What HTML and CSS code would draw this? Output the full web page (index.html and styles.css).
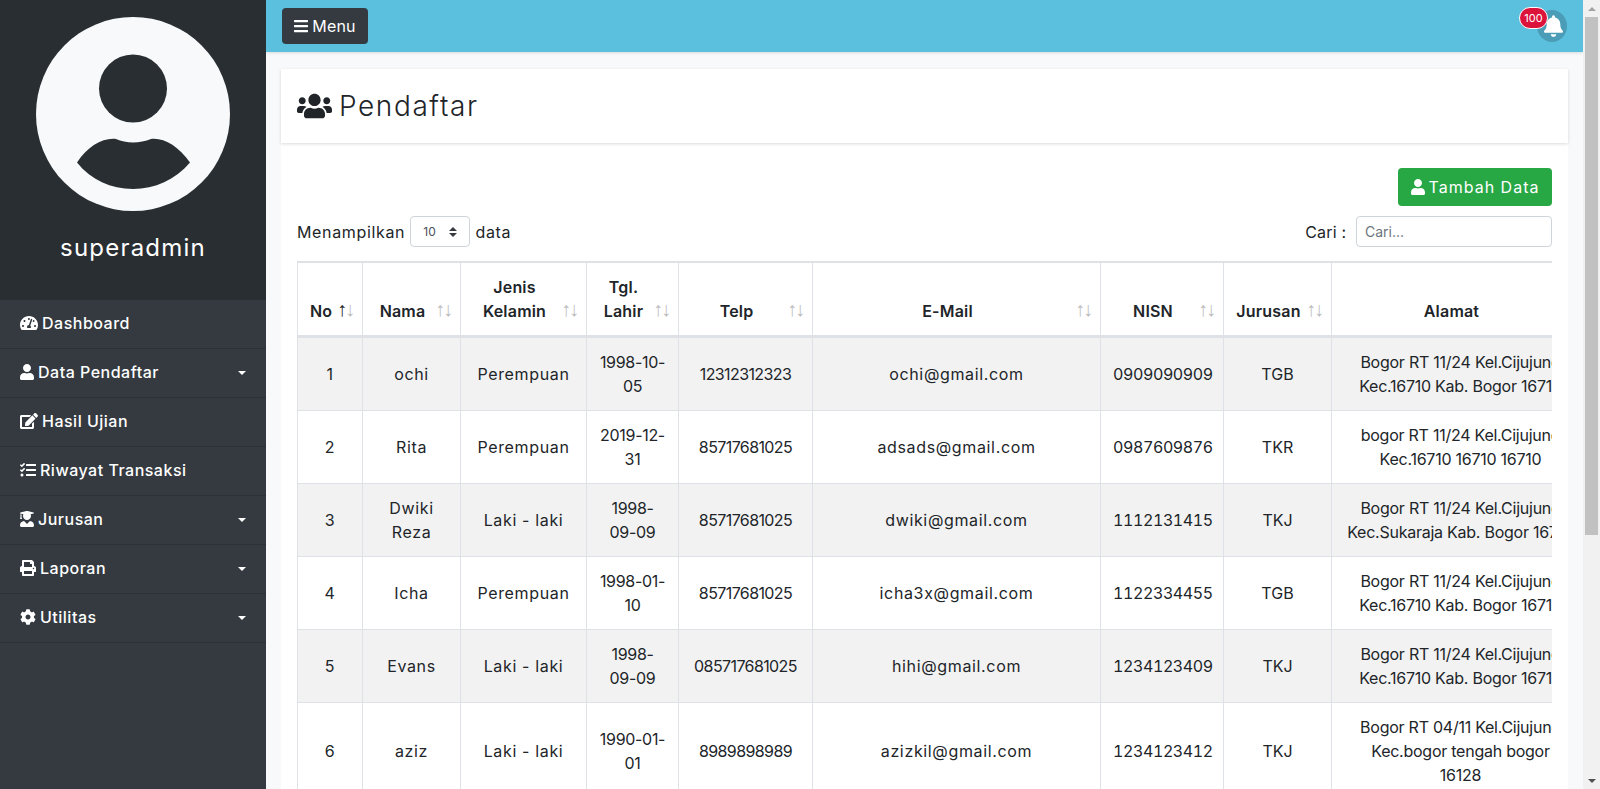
FILE: index.html
```html
<!DOCTYPE html>
<html lang="id">
<head>
<meta charset="utf-8">
<title>Pendaftar</title>
<link rel="stylesheet" href="styles.css">
</head>
<body>
<div class="app">
  <aside class="sidebar">
    <div class="side-head">
      <svg class="avatar" viewBox="36 17 194 194"><circle cx="133" cy="114" r="97" fill="#f8f9fa"/><circle cx="133" cy="88.5" r="34" fill="#292e33"/><path fill="#292e33" d="M77 162.5C88 146 103 137.500 116 139C126 143.500 140 143.500 151 139C164 137.500 178 146 190 162.500C175 180 155 189 133 189C111 189 91 180 77 162.500Z"/></svg>
      <div class="username">superadmin</div>
    </div>
    <nav class="menu">
      <a class="item"><svg class="ic w18" viewBox="0 0 576 512"><path d="M288 32C128.940 32 0 160.940 0 320c0 52.800 14.250 102.260 39.060 144.800 5.610 9.620 16.300 15.200 27.440 15.200h443c11.140 0 21.830-5.580 27.440-15.200C561.750 422.260 576 372.800 576 320c0-159.060-128.940-288-288-288zm0 64c14.710 0 26.580 10.130 30.320 23.650-1.110 2.260-2.640 4.230-3.450 6.670l-9.220 27.670c-5.130 3.490-10.970 6.010-17.640 6.010-17.670 0-32-14.330-32-32S270.330 96 288 96zM96 384c-17.670 0-32-14.330-32-32s14.330-32 32-32 32 14.330 32 32-14.330 32-32 32zm48-160c-17.670 0-32-14.330-32-32s14.330-32 32-32 32 14.330 32 32-14.330 32-32 32zm246.770-72.410l-61.330 184C343.130 347.330 352 364.540 352 384c0 11.720-3.380 22.550-8.880 32H232.880c-5.500-9.450-8.880-20.280-8.880-32 0-33.940 26.500-61.430 59.900-63.590l61.340-184.010c4.170-12.560 17.730-19.450 30.360-15.170 12.570 4.190 19.350 17.790 15.170 30.360zm14.660 57.200l15.520-46.550c3.470-1.290 7.130-2.230 11.050-2.230 17.670 0 32 14.330 32 32s-14.330 32-32 32c-11.380-.01-20.890-6.280-26.570-15.220zM480 384c-17.670 0-32-14.330-32-32s14.330-32 32-32 32 14.330 32 32-14.330 32-32 32z"/></svg><span>Dashboard</span></a>
      <a class="item caret"><svg class="ic w14" viewBox="0 0 448 512"><path d="M224 256c70.700 0 128-57.300 128-128S294.700 0 224 0 96 57.300 96 128s57.300 128 128 128zm89.600 32h-16.700c-22.200 10.200-46.900 16-72.900 16s-50.600-5.800-72.900-16h-16.700C60.200 288 0 348.200 0 422.400V464c0 26.500 21.500 48 48 48h352c26.500 0 48-21.500 48-48v-41.600c0-74.200-60.200-134.400-134.400-134.400z"/></svg><span>Data Pendaftar</span></a>
      <a class="item"><svg class="ic w18" viewBox="0 0 576 512"><path d="M402.600 83.200l90.200 90.200c3.800 3.800 3.800 10 0 13.800L274.400 405.600l-92.800 10.300c-12.400 1.400-22.900-9.100-21.500-21.500l10.300-92.800L388.800 83.200c3.800-3.800 10-3.800 13.800 0zm162-22.900l-48.800-48.800c-15.200-15.200-39.900-15.200-55.200 0l-35.400 35.400c-3.800 3.800-3.800 10 0 13.800l90.200 90.200c3.800 3.800 10 3.800 13.800 0l35.400-35.400c15.200-15.300 15.200-40 0-55.200zM384 346.200V448H64V128h229.800c3.200 0 6.200-1.300 8.500-3.500l40-40c7.600-7.600 2.200-20.500-8.500-20.500H48C21.500 64 0 85.500 0 112v352c0 26.500 21.500 48 48 48h352c26.500 0 48-21.500 48-48V306.200c0-10.700-12.900-16-20.500-8.500l-40 40c-2.200 2.300-3.500 5.300-3.500 8.500z"/></svg><span>Hasil Ujian</span></a>
      <a class="item"><svg class="ic w16" viewBox="0 0 512 512"><path d="M139.610 35.500a12 12 0 0 0-17 0L58.930 98.810l-22.700-22.120a12 12 0 0 0-17 0L3.530 92.410a12 12 0 0 0 0 17l47.590 47.400a12.780 12.780 0 0 0 17.610 0l15.590-15.620L156.520 69a12.090 12.090 0 0 0 .09-17zm0 159.190a12 12 0 0 0-17 0l-63.680 63.720-22.700-22.100a12 12 0 0 0-17 0L3.530 252a12 12 0 0 0 0 17L51 316.500a12.770 12.770 0 0 0 17.600 0l15.700-15.690 72.200-72.220a12 12 0 0 0 .09-16.900zM64 368c-26.490 0-48.590 21.500-48.590 48S37.530 464 64 464a48 48 0 0 0 0-96zm432 16H208a16 16 0 0 0-16 16v32a16 16 0 0 0 16 16h288a16 16 0 0 0 16-16v-32a16 16 0 0 0-16-16zm0-320H208a16 16 0 0 0-16 16v32a16 16 0 0 0 16 16h288a16 16 0 0 0 16-16V80a16 16 0 0 0-16-16zm0 160H208a16 16 0 0 0-16 16v32a16 16 0 0 0 16 16h288a16 16 0 0 0 16-16v-32a16 16 0 0 0-16-16z"/></svg><span>Riwayat Transaksi</span></a>
      <a class="item caret"><svg class="ic w14" viewBox="0 0 448 512"><path d="M319.400 320.600L224 416l-95.400-95.400C57.100 323.700 0 382.200 0 454.400v9.600c0 26.500 21.500 48 48 48h352c26.500 0 48-21.500 48-48v-9.600c0-72.200-57.100-130.700-128.600-133.800zM13.600 79.800l6.400 1.500v58.400c-7 4.200-12 11.500-12 20.300 0 8.400 4.600 15.400 11.100 19.700L3.500 242c-1.700 6.900 2.100 14 7.600 14h41.800c5.500 0 9.300-7.100 7.600-14l-15.600-62.300C51.400 175.400 56 168.400 56 160c0-8.800-5-16.100-12-20.300V87.100l66 15.900c-8.600 17.200-14 36.400-14 57 0 70.700 57.300 128 128 128s128-57.300 128-128c0-20.600-5.300-39.800-14-57l96.300-23.200c18.200-4.400 18.200-27.100 0-31.500l-190.400-46c-13-3.100-26.700-3.100-39.700 0L13.600 48.200c-18.100 4.400-18.100 27.200 0 31.600z"/></svg><span>Jurusan</span></a>
      <a class="item caret"><svg class="ic w16" viewBox="0 0 512 512"><path d="M448 192V77.250c0-8.490-3.370-16.620-9.370-22.630L393.370 9.370c-6-6-14.140-9.370-22.630-9.370H96C78.330 0 64 14.330 64 32v160c-35.350 0-64 28.650-64 64v112c0 8.840 7.160 16 16 16h48v96c0 17.670 14.330 32 32 32h320c17.670 0 32-14.330 32-32v-96h48c8.840 0 16-7.160 16-16V256c0-35.350-28.650-64-64-64zm-64 256H128v-96h256v96zm0-224H128V64h192v48c0 8.840 7.160 16 16 16h48v96zm48 72c-13.250 0-24-10.750-24-24 0-13.260 10.750-24 24-24s24 10.740 24 24c0 13.250-10.750 24-24 24z"/></svg><span>Laporan</span></a>
      <a class="item caret"><svg class="ic w16" viewBox="0 0 512 512"><path d="M487.400 315.700l-42.600-24.600c4.300-23.200 4.300-47 0-70.200l42.600-24.600c4.900-2.800 7.100-8.600 5.500-14-11.100-35.600-30-67.800-54.700-94.600-3.800-4.100-10-5.100-14.800-2.300L380.800 110c-17.900-15.400-38.500-27.300-60.800-35.100V25.800c0-5.600-3.900-10.500-9.400-11.700-36.700-8.200-74.300-7.800-109.200 0-5.500 1.200-9.400 6.100-9.400 11.700V75c-22.200 7.900-42.800 19.800-60.800 35.100L88.700 85.500c-4.900-2.800-11-1.900-14.800 2.300-24.700 26.700-43.600 58.900-54.700 94.600-1.700 5.400.6 11.200 5.500 14L67.300 221c-4.300 23.200-4.300 47 0 70.200l-42.600 24.600c-4.900 2.800-7.100 8.600-5.500 14 11.100 35.600 30 67.800 54.700 94.600 3.800 4.100 10 5.100 14.800 2.300l42.600-24.600c17.900 15.400 38.500 27.300 60.800 35.100v49.200c0 5.600 3.900 10.500 9.400 11.700 36.700 8.200 74.300 7.800 109.200 0 5.500-1.200 9.400-6.100 9.400-11.700v-49.200c22.200-7.900 42.800-19.800 60.800-35.100l42.600 24.600c4.900 2.800 11 1.900 14.800-2.300 24.700-26.700 43.600-58.900 54.700-94.600 1.500-5.500-.7-11.300-5.600-14.100zM256 336c-44.100 0-80-35.900-80-80s35.900-80 80-80 80 35.900 80 80-35.900 80-80 80z"/></svg><span>Utilitas</span></a>
    </nav>
  </aside>
  <main class="main">
    <header class="topbar">
      <button class="menu-btn"><svg class="ic w14" viewBox="0 0 448 512"><path d="M16 132h416c8.837 0 16-7.163 16-16V76c0-8.837-7.163-16-16-16H16C7.163 60 0 67.163 0 76v40c0 8.837 7.163 16 16 16zm0 160h416c8.837 0 16-7.163 16-16v-40c0-8.837-7.163-16-16-16H16c-8.837 0-16 7.163-16 16v40c0 8.837 7.163 16 16 16zm0 160h416c8.837 0 16-7.163 16-16v-40c0-8.837-7.163-16-16-16H16c-8.837 0-16 7.163-16 16v40c0 8.837 7.163 16 16 16z"/></svg><span>Menu</span></button>
      <div class="bell">
        <svg class="bell-ic" viewBox="0 0 448 512"><path d="M224 512c35.320 0 63.970-28.650 63.970-64H160.030c0 35.350 28.650 64 63.970 64zm215.390-149.710c-19.320-20.760-55.470-51.990-55.470-154.290 0-77.700-54.480-139.900-127.940-155.160V32c0-17.670-14.320-32-31.980-32s-31.980 14.330-31.980 32v20.840C118.560 68.100 64.080 130.300 64.080 208c0 102.300-36.150 133.530-55.470 154.290-6 6.450-8.660 14.160-8.610 21.710.11 16.400 12.980 32 32.100 32h383.800c19.120 0 32-15.600 32.100-32 .05-7.550-2.610-15.270-8.610-21.710z"/></svg>
        <span class="badge">100</span>
      </div>
    </header>
    <div class="content">
      <section class="title-card">
        <svg class="title-ic" viewBox="0 0 640 512"><path d="M96 224c35.300 0 64-28.700 64-64s-28.700-64-64-64-64 28.700-64 64 28.700 64 64 64zm448 0c35.300 0 64-28.700 64-64s-28.700-64-64-64-64 28.700-64 64 28.700 64 64 64zm32 32h-64c-17.600 0-33.500 7.100-45.100 18.600 40.300 22.100 68.900 62 75.100 109.400h66c17.700 0 32-14.300 32-32v-32c0-35.300-28.700-64-64-64zm-256 0c61.900 0 112-50.100 112-112S381.900 32 320 32 208 82.100 208 144s50.100 112 112 112zm76.800 32h-8.300c-20.800 10-43.900 16-68.500 16s-47.600-6-68.500-16h-8.300C179.600 288 128 339.600 128 403.200V432c0 26.500 21.500 48 48 48h288c26.500 0 48-21.500 48-48v-28.800c0-63.600-51.600-115.200-115.200-115.200zm-223.700-13.400C161.500 263.100 145.600 256 128 256H64c-35.300 0-64 28.700-64 64v32c0 17.700 14.300 32 32 32h65.900c6.300-47.400 34.900-87.300 75.200-109.400z"/></svg>
        <h1 class="title">Pendaftar</h1>
      </section>
      <section class="body-card">
        <div class="actions">
          <button class="add-btn"><svg class="ic w14" viewBox="0 0 448 512"><path d="M224 256c70.700 0 128-57.300 128-128S294.700 0 224 0 96 57.300 96 128s57.300 128 128 128zm89.600 32h-16.700c-22.200 10.200-46.900 16-72.900 16s-50.600-5.800-72.900-16h-16.700C60.200 288 0 348.200 0 422.400V464c0 26.500 21.500 48 48 48h352c26.500 0 48-21.500 48-48v-41.600c0-74.200-60.200-134.400-134.400-134.400z"/></svg><span>Tambah Data</span></button>
        </div>
        <div class="controls">
          <label class="length">Menampilkan <select class="select"><option>10</option></select> data</label>
          <label class="search">Cari : <input class="input" type="text" placeholder="Cari..."></label>
        </div>
        <div class="table-wrap">
          <table class="table">
            <colgroup><col class="c1"><col class="c2"><col class="c3"><col class="c4"><col class="c5"><col class="c6"><col class="c7"><col class="c8"><col class="c9"></colgroup>
            <thead>
              <tr>
                <th class="sort asc">No</th><th class="sort">Nama</th><th class="sort">Jenis Kelamin</th><th class="sort">Tgl.<br>Lahir</th><th class="sort">Telp</th><th class="sort">E-Mail</th><th class="sort">NISN</th><th class="sort">Jurusan</th><th class="sort">Alamat</th>
              </tr>
            </thead>
            <tbody>
              <tr><td>1</td><td>ochi</td><td>Perempuan</td><td class="date">1998-10-<br>05</td><td class="phone">12312312323</td><td>ochi@gmail.com</td><td class="nisn">0909090909</td><td class="code">TGB</td><td class="addr">Bogor RT 11/24 Kel.Cijujung<br>Kec.16710 Kab. Bogor 16710</td></tr>
              <tr><td>2</td><td>Rita</td><td>Perempuan</td><td class="date">2019-12-<br>31</td><td class="phone">85717681025</td><td>adsads@gmail.com</td><td class="nisn">0987609876</td><td class="code">TKR</td><td class="addr">bogor RT 11/24 Kel.Cijujung<br>Kec.16710 16710 16710</td></tr>
              <tr><td>3</td><td>Dwiki<br>Reza</td><td>Laki - laki</td><td class="date">1998-<br>09-09</td><td class="phone">85717681025</td><td>dwiki@gmail.com</td><td class="nisn">1112131415</td><td class="code">TKJ</td><td class="addr">Bogor RT 11/24 Kel.Cijujung<br>Kec.Sukaraja Kab. Bogor 16710</td></tr>
              <tr><td>4</td><td>Icha</td><td>Perempuan</td><td class="date">1998-01-<br>10</td><td class="phone">85717681025</td><td>icha3x@gmail.com</td><td class="nisn">1122334455</td><td class="code">TGB</td><td class="addr">Bogor RT 11/24 Kel.Cijujung<br>Kec.16710 Kab. Bogor 16710</td></tr>
              <tr><td>5</td><td>Evans</td><td>Laki - laki</td><td class="date">1998-<br>09-09</td><td class="phone">085717681025</td><td>hihi@gmail.com</td><td class="nisn">1234123409</td><td class="code">TKJ</td><td class="addr">Bogor RT 11/24 Kel.Cijujung<br>Kec.16710 Kab. Bogor 16710</td></tr>
              <tr><td>6</td><td>aziz</td><td>Laki - laki</td><td class="date">1990-01-<br>01</td><td class="phone">8989898989</td><td>azizkil@gmail.com</td><td class="nisn">1234123412</td><td class="code">TKJ</td><td class="addr">Bogor RT 04/11 Kel.Cijujung<br>Kec.bogor tengah bogor<br>16128</td></tr>
            </tbody>
          </table>
        </div>
      </section>
    </div>
  </main>
  <div class="scrollbar">
    <span class="sb-btn sb-up"></span>
    <span class="sb-thumb"></span>
    <span class="sb-btn sb-down"></span>
  </div>
</div>
</body>
</html>
```
FILE: styles.css
```css
* { box-sizing: border-box; }
html, body { margin: 0; height: 100%; overflow: hidden; }
body {
  font-family: Inter, "Liberation Sans", sans-serif;
  font-size: 16px;
  line-height: 24px;
  color: #212529;
  background: #f8f9fa;
}
.app { display: flex; height: 100vh; }

.sidebar { width: 266px; flex: none; background: #343a40; color: #fff; }
.side-head { height: 300px; background: #292e33; display: flex; flex-direction: column; align-items: center; padding-top: 17px; }
.avatar { width: 194px; height: 194px; display: block; }
.username { margin-top: 19px; font-size: 24px; line-height: 36px; font-weight: 400; letter-spacing: 1.2px; }
.menu { display: flex; flex-direction: column; }
.item { height: 49px; padding: 0 20px 2px; display: flex; align-items: center; gap: 4px; border-bottom: 1px solid #2d3237; font-weight: 500; font-size: 16px; letter-spacing: .5px; color: #fff; position: relative; }
.caret::after { content: ""; position: absolute; right: 20px; top: 22px; border-top: 4.800px solid #fff; border-left: 4.800px solid transparent; border-right: 4.800px solid transparent; }

.ic { height: 16px; fill: currentColor; flex: none; display: block; }
.w14 { width: 14px; }
.w16 { width: 16px; }
.w18 { width: 18px; }

.main { flex: 1; min-width: 0; height: 100vh; overflow: hidden; background: #f8f9fa; }

.scrollbar { width: 17px; flex: none; height: 100vh; background: #f1f1f1; display: flex; flex-direction: column; align-items: center; }
.sb-btn { height: 17px; width: 17px; flex: none; display: flex; align-items: center; justify-content: center; }
.sb-btn::before { content: ""; border-left: 4px solid transparent; border-right: 4px solid transparent; }
.sb-up::before { border-bottom: 4px solid #a3a3a3; }
.sb-down { margin-top: auto; }
.sb-down::before { border-top: 4px solid #505050; }
.sb-thumb { width: 13px; height: 518px; background: #c1c1c1; }

.topbar { height: 52px; background: #5bc0de; display: flex; align-items: flex-start; justify-content: space-between; padding: 8px 16px; box-shadow: 0 1px 3px rgba(0,0,0,.12); position: relative; }
.menu-btn { height: 36px; width: 86px; border: 0; border-radius: 4px; background: #343a40; color: #fff; font: inherit; letter-spacing: .2px; display: flex; align-items: center; justify-content: center; gap: 4px; padding: 0; }
.bell { width: 30px; height: 32px; margin-top: 2px; border-radius: 50%; background: #4b9cb6; display: flex; align-items: center; justify-content: center; position: relative; }
.bell-ic { width: 19px; height: 22px; fill: #fff; display: block; margin-left: 2px; }
.badge { position: absolute; left: -18px; top: -3px; width: 29px; height: 22px; border: 1px solid #fff; border-radius: 12px; background: #dc143c; color: #fff; font-size: 11px; line-height: 20px; text-align: center; }

.content { padding: 17px 15px 0; }
.title-card { height: 74px; background: #fff; padding: 0 16px; display: flex; align-items: center; gap: 7px; box-shadow: 0 1px 3px rgba(0,0,0,.15); position: relative; }
.title-ic { width: 35px; height: 28px; fill: #212529; display: block; flex: none; }
.title { margin: 0; font-size: 28px; line-height: 34px; font-weight: 300; letter-spacing: 1.6px; }
.body-card { background: #fff; padding: 25px 16px 16px; }
.actions { display: flex; justify-content: flex-end; }
.add-btn { width: 154px; height: 38px; border: 0; border-radius: 4px; background: #28a745; color: #fff; font: inherit; letter-spacing: 1px; display: flex; align-items: center; justify-content: center; gap: 4px; padding: 0; }
.controls { margin-top: 10px; height: 31px; display: flex; justify-content: space-between; align-items: center; letter-spacing: .65px; }
.length, .search { display: flex; align-items: center; white-space: pre; }
.search { gap: 5px; letter-spacing: .2px; }
.select { appearance: none; width: 60px; height: 31px; border: 1px solid #ced4da; border-radius: 4px; padding: 0 8px 0 12px; font: 12px/1 Inter, sans-serif; color: #495057; background: #fff url("data:image/svg+xml,%3csvg xmlns='http://www.w3.org/2000/svg' width='4' height='5' viewBox='0 0 4 5'%3e%3cpath fill='%23343a40' d='M2 0L0 2h4zm0 5L0 3h4z'/%3e%3c/svg%3e") no-repeat right 12px center / 8px 10px; }
.input { width: 196px; height: 31px; border: 1px solid #ced4da; border-radius: 4px; padding: 0 8px; font: 14px Inter, sans-serif; color: #495057; background: #fff; }
.input::placeholder { color: #6c757d; opacity: 1; }

.table-wrap { margin-top: 14px; overflow: hidden; }
.table { width: 1292px; table-layout: fixed; border-collapse: collapse; text-align: center; border-top: 2px solid #dee2e6; }
.c1 { width: 65px; } .c2 { width: 98px; } .c3 { width: 126px; } .c4 { width: 92px; } .c5 { width: 134px; } .c6 { width: 288px; } .c7 { width: 123px; } .c8 { width: 108px; } .c9 { width: 258px; }
.table th, .table td { border: 1px solid #dee2e6; padding: 12px; vertical-align: middle; white-space: nowrap; }
.table td { letter-spacing: .65px; }
.table th { vertical-align: bottom; font-weight: 600; border-bottom-width: 3px; border-top: 0; white-space: normal; letter-spacing: .2px; }
.table td.date { letter-spacing: -.3px; }
.table td.phone { letter-spacing: -.6px; }
.table td.nisn { letter-spacing: -.4px; font-variant-numeric: tabular-nums; }
.table td.code { letter-spacing: 0; }
.table td.addr { letter-spacing: -.25px; }
.table tbody tr:nth-child(odd) { background: #f2f2f2; }
.sort { position: relative; padding-right: 30px !important; }
.sort::before, .sort::after { position: absolute; bottom: 14px; font: 20px/24px "Liberation Sans", sans-serif; letter-spacing: 0; opacity: .3; }
.sort::before { content: "\2191"; right: 15px; }
.sort::after { content: "\2193"; right: 7px; }
.asc::before { opacity: 1; }
```
